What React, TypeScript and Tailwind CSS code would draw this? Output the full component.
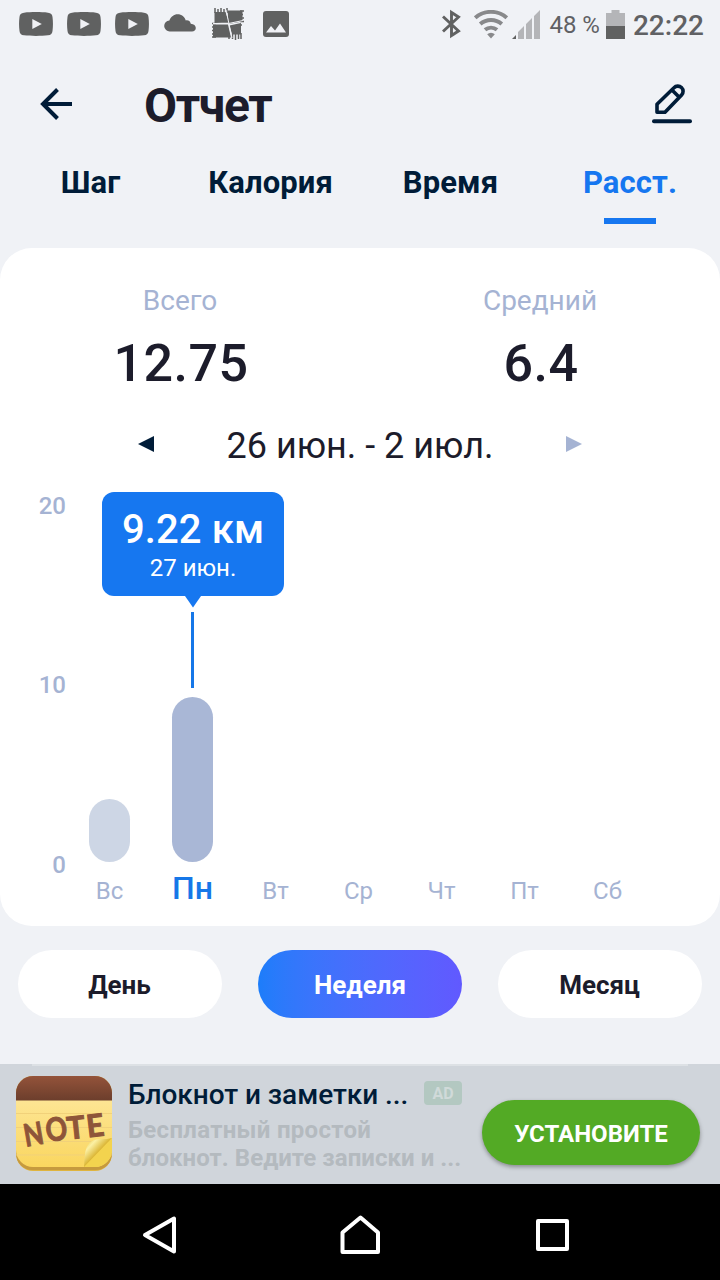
import clsx from "clsx";

const TABS = ["Шаг", "Калория", "Время", "Расст."];
const PERIODS = ["День", "Неделя", "Месяц"];

interface DayEntry {
  label: string;
  height: number;
}

// bar heights in px, the 0–20 km axis spans 359px
const DAYS: DayEntry[] = [
  { label: "Вс", height: 63.5 },
  { label: "Пн", height: 165.5 },
  { label: "Вт", height: 0 },
  { label: "Ср", height: 0 },
  { label: "Чт", height: 0 },
  { label: "Пт", height: 0 },
  { label: "Сб", height: 0 },
];

const activeTab = "Расст.";
const activePeriod = "Неделя";
const activeDay = "Пн";

function VideoIcon() {
  return (
    <svg width="34" height="24" viewBox="0 0 34 24" className="shrink-0">
      <path
        d="M5 .7C12 -.1 22 -.1 29 .7c3 .3 4.2 1.4 4.5 4.3.6 4.6.6 9.4 0 14-.3 2.900-1.500 4-4.500 4.300-7 .8-17 .8-24 0C2 23 .8 21.900.5 19c-.6-4.600-.6-9.400 0-14C.8 2.100 2 1 5 .7z"
        fill="#606161"
      />
      <path d="M13.300 7v10l9.500-5z" fill="#f0f1f5" />
    </svg>
  );
}

function StatusBar() {
  return (
    <div className="flex h-12 items-center justify-between pr-4 pl-[19px] text-[#606164]">
      <div className="flex items-center">
        <div className="flex gap-[14px]">
          <VideoIcon />
          <VideoIcon />
          <VideoIcon />
        </div>
        <svg width="32" height="18" viewBox="0 0 32 18" className="-mt-0.5 ml-[15px]" fill="#606161">
          <path d="M6 17.500a5.500 5.500 0 0 1-.6-11C7 2.600 10 .3 13.500.3c4.200 0 7.300 2.600 8.300 6.200 2.200-.6 4.400.6 5 3.200 3 .2 5 1.900 5 4.300 0 2.200-1.600 3.500-3.800 3.500z" />
        </svg>
        <svg width="32" height="32" viewBox="0 0 32 32" className="ml-4">
          <path d="M2.500 4h11l3.500 10.500L2.500 15zM15.500 2.500h15v11l-14 2.500zM1 16.500h15l3 13H1zM17.500 17.500L29 15v11.500H20z" fill="#606161" />
          <path
            d="M3 0v5M6 1v4M9 0v5M12 1v4M15 0v5M28 3h4M28 6.500h3M28 10h4M28 13.500h4M28 17h2M17 26v5M20.500 26v5M23.500 26v6M26.500 26v5M29 25v6M0 15.500h4M0 19h4M0 22.500h4M0 26h4M0 29h4"
            stroke="#606161"
            strokeWidth="1.500"
          />
          <path d="M14 2l3 14 3 14M1 15.500h15.500L31 12.500" stroke="#f0f1f5" strokeWidth="1" fill="none" />
        </svg>
        <svg width="26" height="26" viewBox="0 0 26 26" className="ml-[19px]">
          <rect width="26" height="26" rx="3" fill="#606161" />
          <path d="M3 21.500l5-6.500 4 4.500 5-7 6 9z" fill="#f0f1f5" />
        </svg>
      </div>
      <div className="flex items-center">
        <svg width="20" height="30" viewBox="0 0 20 30" fill="none" stroke="#606161" strokeWidth="2.900">
          <path d="M2 7.500l15.500 14.500L10.500 26.500V3.500L17.500 8 2 22.500" />
        </svg>
        <svg width="34" height="29" viewBox="0 0 34 29" className="ml-[13px] shrink-0" fill="none" stroke="#88898b" strokeWidth="4">
          <path d="M1.200 7.800a24 24 0 0 1 31.600 0" />
          <path d="M6.200 14a16.500 16.500 0 0 1 21.600 0" />
          <path d="M11 19.800a9.500 9.500 0 0 1 12 0" />
          <path d="M17 28.500l-3.800-4.300a5.500 5.500 0 0 1 7.600 0z" fill="#88898b" stroke="none" />
        </svg>
        <svg width="28" height="29" viewBox="0 0 28 29" className="ml-1 shrink-0" fill="#b4b5b8">
          <path d="M0 29l4-4v4z" fill="#606161" />
          <path d="M6 29v-7l6-6v13zM14 29V14l6-6v21zM22 29V6l6-6v29z" />
        </svg>
        <span className="mt-0.5 ml-[9px] text-2xl leading-none whitespace-nowrap">48 %</span>
        <svg width="19" height="29" viewBox="0 0 19 29" className="ml-[6px] shrink-0">
          <path d="M5.500 0h8v3H19v13H0V3h5.500z" fill="#b4b5b8" />
          <path d="M0 16h19v13H0z" fill="#606161" />
        </svg>
        <span className="mt-[3px] ml-2 text-[28px] leading-none font-medium">22:22</span>
      </div>
    </div>
  );
}

function Header() {
  return (
    <header className="flex h-28 items-center pr-7 pl-10 text-[#001c38]">
      <button type="button" aria-label="Назад">
        <svg width="32" height="32" viewBox="0 0 32 32" fill="none" stroke="currentColor" strokeWidth="4">
          <path d="M32 16H3M17.500 1.500L3 16l14.500 14.500" />
        </svg>
      </button>
      <h1 className="mt-[3px] ml-[72px] flex-1 text-5xl font-bold tracking-[-1.4px] text-[#1c1c2b]">Отчет</h1>
      <button type="button" aria-label="Изменить">
        <svg width="40" height="40" viewBox="0 0 40 40" fill="none" stroke="currentColor" strokeWidth="3.600">
          <path d="M5 28.200v-8L22 3.700a5.200 5.200 0 0 1 7.600 7.300L13 28.200zM20 6l7 7" strokeLinejoin="round" />
          <path d="M2 37.200h36" strokeLinecap="round" strokeWidth="4" />
        </svg>
      </button>
    </header>
  );
}

function Stat({ label, value }: { label: string; value: string }) {
  return (
    <div className="flex flex-col items-center">
      <span className="text-[28px] leading-10 text-[#a5b3d3]">{label}</span>
      <span className="mt-[11px] ml-0.5 text-[52px] leading-[64px] font-medium tracking-[0.5px] text-[#1c1c2b]">{value}</span>
    </div>
  );
}

function Chart() {
  return (
    <div className="mt-6 flex h-[420px] pr-[71px] pl-[33px]">
      <div className="flex h-[383px] w-[33px] flex-col justify-between text-right text-2xl leading-6 font-medium text-[#a5b3d3]">
        <span>20</span>
        <span className="-mt-px">10</span>
        <span>0</span>
      </div>
      <div className="ml-0.5 grid flex-1 grid-cols-7">
        {DAYS.map((day) => {
          const active = day.label === activeDay;
          return (
            <div key={day.label} className="relative flex flex-col items-center">
              {active && (
                <div className="absolute -top-0.5 flex flex-col items-center">
                  <div className="flex h-[104px] w-[182px] flex-col items-center rounded-xl bg-[#1677f0] pt-[13px] pl-px text-white">
                    <span className="text-[40px] leading-[50px] font-medium tracking-[0.1px] whitespace-nowrap">9.22 км</span>
                    <span className="text-2xl leading-[27px]">27 июн.</span>
                  </div>
                  <svg width="16" height="12" viewBox="0 0 16 12" fill="#1677f0">
                    <path d="M0 0h16L8 11.500z" />
                  </svg>
                  <div className="mt-1 h-[76px] w-[3px] bg-[#1677e8]" />
                </div>
              )}
              <div className="flex h-[368px] items-end">
                <div
                  className={clsx("w-[41.5px] rounded-full", active ? "bg-[#a9b7d6]" : "bg-[#cdd6e5]")}
                  style={{ height: day.height }}
                />
              </div>
              <span
                className={clsx(
                  "leading-9",
                  active ? "mt-2 text-[32px] font-medium text-[#1677e8]" : "mt-[11px] text-2xl text-[#a5b3d3]"
                )}
              >
                {day.label}
              </span>
            </div>
          );
        })}
      </div>
    </div>
  );
}

function NoteIcon() {
  return (
    <svg width="96" height="96" viewBox="0 0 96 96" className="shrink-0 overflow-visible">
      <defs>
        <clipPath id="note-clip">
          <rect width="96" height="95" rx="17" />
        </clipPath>
        <linearGradient id="note-top" x1="0" y1="0" x2="0" y2="1">
          <stop offset="0" stopColor="#94533a" />
          <stop offset="1" stopColor="#6c3e2c" />
        </linearGradient>
        <linearGradient id="note-paper" x1="0" y1="0" x2="0" y2="1">
          <stop offset="0" stopColor="#fde594" />
          <stop offset="1" stopColor="#fad65f" />
        </linearGradient>
        <linearGradient id="note-curl" x1="0" y1="0" x2="1" y2="1">
          <stop offset="0.050" stopColor="#e9c93f" />
          <stop offset="0.250" stopColor="#fbf0a4" />
          <stop offset="0.520" stopColor="#d8b02a" />
        </linearGradient>
      </defs>
      <g clipPath="url(#note-clip)">
        <rect width="96" height="96" fill="#dfb43f" />
        <rect y="20" width="96" height="74" rx="16" fill="#c69a3e" />
        <path d="M0 24h96v50a17 17 0 0 1-17 17H17A17 17 0 0 1 0 74z" fill="url(#note-paper)" />
        <rect width="96" height="24.500" fill="url(#note-top)" />
        <path d="M0 37.500h96M0 51.500h96M0 65.500h96M0 79h96" stroke="#f1d17a" strokeWidth="1" />
        <path d="M96 62L68 91h11a17 17 0 0 0 17-17z" fill="#f3d34e" />
        <path d="M96 62c-7 2-15 0-20 3-8 5-7 15-8 26z" fill="url(#note-curl)" />
      </g>
      <g fill="#8e5539" stroke="#8e5539" strokeWidth="1" textAnchor="middle" className="font-['Lato'] text-[31px] font-bold">
        <text transform="translate(19.500 69) rotate(-10) scale(0.820 1)">N</text>
        <text transform="translate(42 64.500) rotate(-8) scale(0.860 1.040)">O</text>
        <text transform="translate(61 62.500) rotate(-6) scale(0.980 1)">T</text>
        <text transform="translate(80.500 60.500) rotate(-7) scale(0.980 1)">E</text>
      </g>
    </svg>
  );
}

function AdBanner() {
  return (
    <div className="relative flex h-[120px] bg-[#d0d5db] pt-3 pr-5 pl-4">
      <div className="absolute inset-x-8 top-0 h-0.5 bg-[#dde1e5]" />
      <NoteIcon />
      <div className="ml-4 flex w-[340px] flex-col">
        <div className="flex h-[38px] items-center">
          <span className="w-[296px] text-[28px] font-medium tracking-[-0.05px] whitespace-nowrap text-[#001c38]">
            Блокнот и заметки ...
          </span>
          <span className="-mt-1 flex h-6 w-[38px] items-center justify-center rounded bg-[#b3c8c1] pt-0.5 text-base font-bold text-[#d0dad9]">
            AD
          </span>
        </div>
        <p className="mt-0.5 text-2xl leading-7 font-bold tracking-[0.05px] whitespace-nowrap text-[#b4babf]">
          <span className="tracking-[0.3px]">Бесплатный простой</span>
          <br />
          блокнот. Ведите записки и ...
        </p>
      </div>
      <button
        type="button"
        className="mt-6 ml-[14px] h-[65px] w-[218px] shrink-0 rounded-full bg-[#53aa25] pt-0.5 text-2xl font-bold text-white shadow-[0_2px_4px_rgba(0,0,0,0.35)]"
      >
        УСТАНОВИТЕ
      </button>
    </div>
  );
}

function NavBar() {
  return (
    <nav className="flex h-24 items-center justify-between bg-black pt-1.5 pr-[148px] pl-[142px]">
      <svg width="36" height="40" viewBox="0 0 36 40" fill="none" stroke="#fff" strokeWidth="4" strokeLinejoin="round">
        <path d="M32 3.500v33L3 20z" />
      </svg>
      <svg width="40" height="40" viewBox="0 0 40 40" className="ml-1.5" fill="none" stroke="#fff" strokeWidth="4" strokeLinejoin="round">
        <path d="M2.500 37V17.500L20.500 2.500 38 17.500V37z" />
      </svg>
      <svg width="36" height="40" viewBox="0 0 36 40" fill="none" stroke="#fff" strokeWidth="4" strokeLinejoin="round">
        <rect x="2" y="6" width="29" height="28" />
      </svg>
    </nav>
  );
}

export default function App() {
  return (
    <div className="flex h-[1280px] w-[720px] flex-col overflow-hidden bg-[#f0f2f6] font-['Roboto',sans-serif]">
      <StatusBar />
      <Header />
      <div className="grid h-[88px] grid-cols-4">
        {TABS.map((tab) => (
          <button
            key={tab}
            type="button"
            className={clsx(
              "flex flex-col items-center pt-[3px] text-[31px] leading-10 font-bold tracking-[0.1px]",
              tab === activeTab ? "text-[#1677f0]" : "pl-px text-[#001c38]"
            )}
          >
            {tab}
            {tab === activeTab && <span className="mt-[15px] h-1.5 w-[52px] bg-[#1677f0]" />}
          </button>
        ))}
      </div>
      <main className="h-[678px] rounded-[32px] bg-white pt-[33px]">
        <div className="grid grid-cols-2">
          <Stat label="Всего" value="12.75" />
          <Stat label="Средний" value="6.4" />
        </div>
        <div className="mt-[26px] flex h-12 items-center justify-between px-[138px]">
          <svg width="16" height="16" viewBox="0 0 16 16" className="-mt-1" fill="#001c38">
            <path d="M16 0v16L0 8z" />
          </svg>
          <span className="text-4xl text-[#1c1c2b]">26 июн. - 2 июл.</span>
          <svg width="16" height="16" viewBox="0 0 16 16" className="-mt-1" fill="#a5b3d3">
            <path d="M0 0v16l16-8z" />
          </svg>
        </div>
        <Chart />
      </main>
      <div className="flex h-[138px] justify-between px-[18px] pt-6">
        {PERIODS.map((period) => (
          <button
            key={period}
            type="button"
            className={clsx(
              "h-[68px] w-[204px] rounded-full pt-0.5 text-[26px] font-bold",
              period === activePeriod
                ? "bg-linear-to-r from-[#1c7dfa] to-[#6159ff] text-white"
                : "bg-white pr-px text-[#1c1c2b]"
            )}
          >
            {period}
          </button>
        ))}
      </div>
      <AdBanner />
      <NavBar />
    </div>
  );
}
